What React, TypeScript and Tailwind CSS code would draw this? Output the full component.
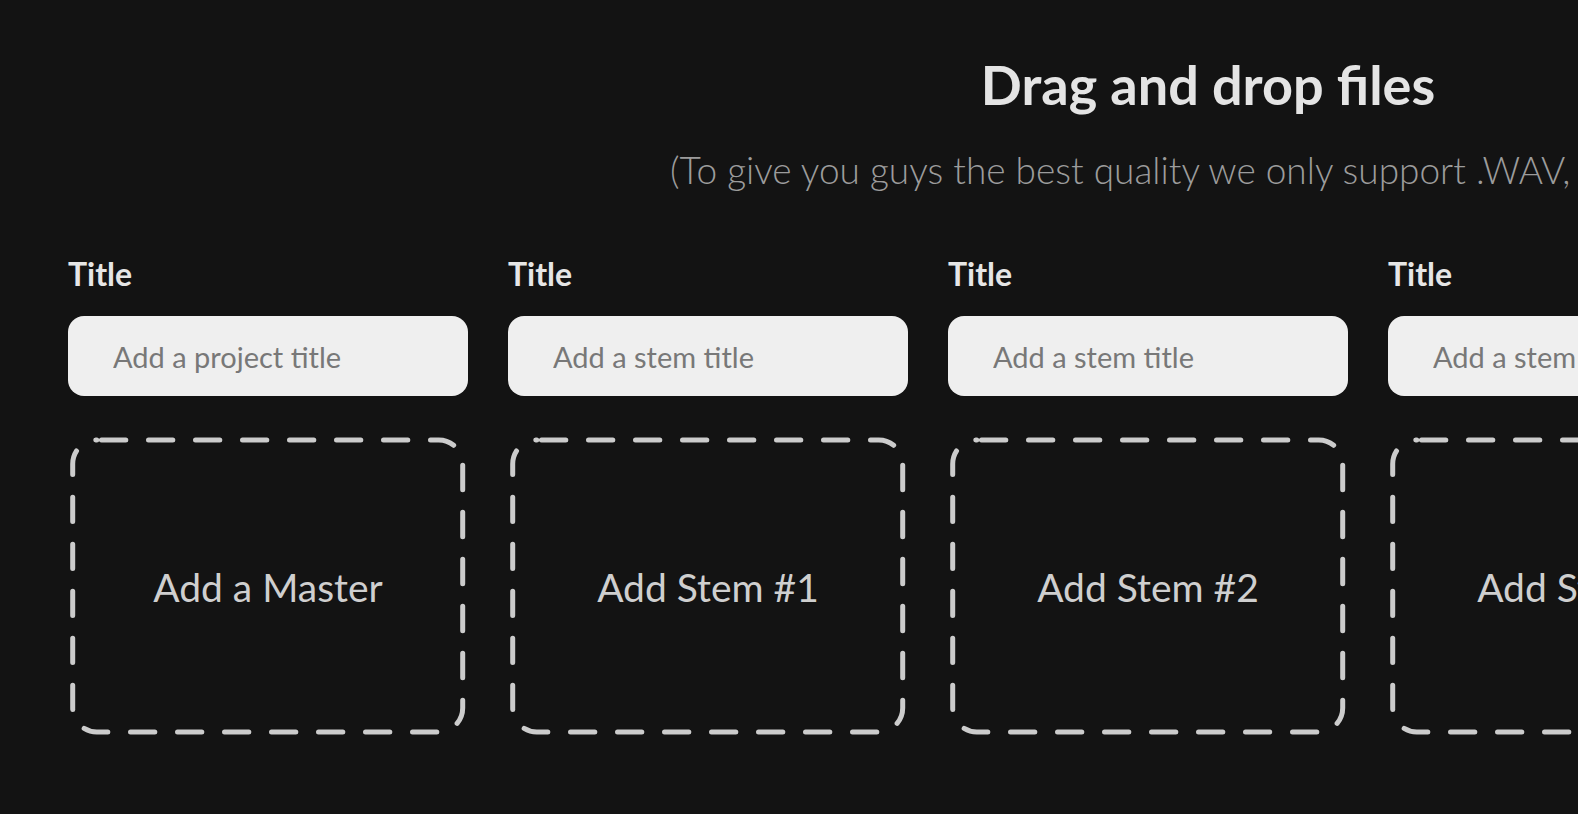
import React from "react";

const columns = [
  { placeholder: "Add a project title", label: "Add a Master" },
  { placeholder: "Add a stem title", label: "Add Stem #1" },
  { placeholder: "Add a stem title", label: "Add Stem #2" },
  { placeholder: "Add a stem title", label: "Add Stem #3" },
  { placeholder: "Add a stem title", label: "Add Stem #4" },
];

function DropZone({ label }: { label: string }) {
  return (
    <div className="relative flex h-[300px] w-[400px] items-center justify-center">
      <svg
        className="absolute inset-0 h-full w-full"
        viewBox="0 0 400 300"
        fill="none"
      >
        <rect
          x="4.7"
          y="4"
          width="390"
          height="292"
          rx="24"
          ry="24"
          stroke="#cccccc"
          strokeWidth="5"
          strokeDasharray="24.3 22.7"
          strokeDashoffset="42.2"
          strokeLinecap="round"
        />
      </svg>
      <span className="relative pt-[3px] text-[39px] leading-none font-normal text-[#cfcfcf]">
        {label}
      </span>
    </div>
  );
}

export default function App() {
  return (
    <div
      className="h-[814px] w-full overflow-hidden bg-[#131313]"
      style={{ fontFamily: "Lato, 'Open Sans', sans-serif" }}
    >
      <div className="flex w-[2416px] flex-col">
        <div className="flex flex-col items-center pt-[58px]">
          <h1 className="text-[54px] leading-[54px] font-bold text-[#e4e4e4]">
            Drag and drop files
          </h1>
          <p className="mt-[39px] whitespace-nowrap text-[37px] leading-[37px] font-light text-[#9c9c9c]">
            (To give you guys the best quality we only support .WAV, .AIFF files)
          </p>
        </div>
        <div className="mt-[70px] flex gap-10 pl-[68px]">
          {columns.map((c, i) => (
            <div key={i} className="flex w-[400px] shrink-0 flex-col">
              <label className="text-[32px] leading-[32px] font-bold text-[#e6e6e6]">
                Title
              </label>
              <input
                type="text"
                placeholder={c.placeholder}
                className="mt-[26px] h-[80px] w-[400px] rounded-2xl bg-[#efefef] px-[45px] text-[29px] text-[#333] outline-none placeholder:text-[#787878]"
              />
              <div className="mt-10">
                <DropZone label={c.label} />
              </div>
            </div>
          ))}
        </div>
      </div>
    </div>
  );
}
